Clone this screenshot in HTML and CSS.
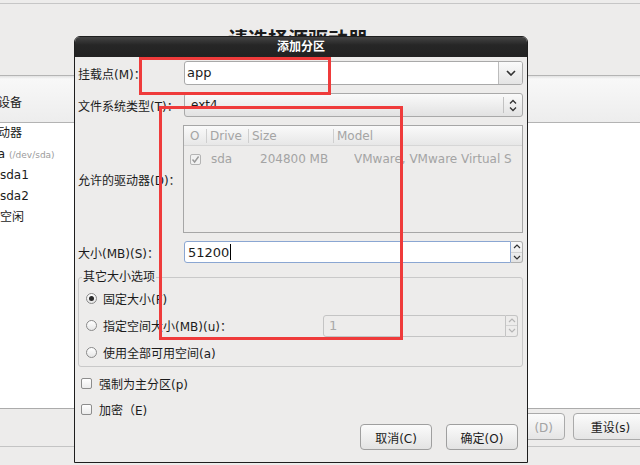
FILE: index.html
```html
<!DOCTYPE html>
<html lang="zh-CN">

<head>
    <meta charset="UTF-8">
    <meta name="viewport" content="width=device-width, initial-scale=1.0">
    <title>添加分区</title>
    <link rel="stylesheet" href="styles.css">
</head>

<body>
    <!-- installer screen behind the dialog -->
    <div class="screen">
        <div class="topline"></div>
        <h1 class="heading">请选择源驱动器</h1>
        <div class="devices">
            <div class="devices-head"><span class="head-text">存储设备</span></div>
            <ul class="tree">
                <li class="lvl0">硬盘驱动器</li>
                <li class="lvl1">sda <span class="dim">(/dev/sda)</span></li>
                <li class="lvl2">sda1</li>
                <li class="lvl2">sda2</li>
                <li class="lvl2">空闲</li>
            </ul>
            <div class="devices-foot">
                <button class="bg-btn btn-off">删除 (D)</button>
                <button class="bg-btn">重设(s)</button>
            </div>
        </div>
    </div>

    <!-- add partition dialog -->
    <div class="dialog">
        <div class="titlebar">添加分区</div>
        <div class="dialog-body">
            <div class="form">
                <label class="lbl">挂载点(M)：</label>
                <div class="combo-entry">
                    <span class="entry-text">app</span>
                    <span class="combo-btn">
                        <svg width="10" height="6" viewBox="0 0 10 6"><path d="M1 1 L5 5 L9 1" fill="none" stroke="#333" stroke-width="1.6"/></svg>
                    </span>
                </div>

                <label class="lbl">文件系统类型(T)：</label>
                <div class="combo">
                    <span class="combo-text">ext4</span>
                    <span class="combo-sep"></span>
                    <span class="combo-arrows">
                        <svg width="8" height="13" viewBox="0 0 8 13"><path d="M1 4.5 L4 1.5 L7 4.5 M1 8.5 L4 11.5 L7 8.5" fill="none" stroke="#333" stroke-width="1.3"/></svg>
                    </span>
                </div>

                <label class="lbl">允许的驱动器(D)：</label>
                <div class="drives">
                    <div class="drives-head">
                        <span class="dh-cell dh-first">O</span>
                        <span class="dh-cell dh-drive">Drive</span>
                        <span class="dh-cell dh-size">Size</span>
                        <span class="dh-cell dh-model">Model</span>
                    </div>
                    <div class="drive-row">
                        <span class="dr-check">
                            <span class="check check-dim">
                                <svg width="9" height="9" viewBox="0 0 9 9"><path d="M1.5 4.5 L3.6 7 L7.6 1.5" fill="none" stroke="#9a9a9a" stroke-width="1.4"/></svg>
                            </span>
                        </span>
                        <span>sda</span>
                        <span>204800 MB</span>
                        <span class="dr-model">VMware, VMware Virtual SCSI Disk</span>
                    </div>
                </div>

                <label class="lbl">大小(MB)(S)：</label>
                <div class="spin">
                    <span class="spin-entry focus">51200<span class="caret"></span></span>
                    <span class="spin-btns">
                        <span class="spin-half"><svg width="8" height="5" viewBox="0 0 8 5"><path d="M1 4 L4 1 L7 4" fill="none" stroke="#333" stroke-width="1.2"/></svg></span>
                        <span class="spin-half"><svg width="8" height="5" viewBox="0 0 8 5"><path d="M1 1 L4 4 L7 1" fill="none" stroke="#333" stroke-width="1.2"/></svg></span>
                    </span>
                </div>
            </div>

            <fieldset class="frame">
                <legend>其它大小选项</legend>
                <div class="radio-row">
                    <span class="radio checked"></span>
                    <span>固定大小(F)</span>
                </div>
                <div class="radio-row">
                    <span class="radio"></span>
                    <span>指定空间大小(MB)(u)：</span>
                    <div class="spin spin-off">
                        <span class="spin-entry">1</span>
                        <span class="spin-btns">
                            <span class="spin-half"><svg width="8" height="5" viewBox="0 0 8 5"><path d="M1 4 L4 1 L7 4" fill="none" stroke="#b5b5b5" stroke-width="1.2"/></svg></span>
                            <span class="spin-half"><svg width="8" height="5" viewBox="0 0 8 5"><path d="M1 1 L4 4 L7 1" fill="none" stroke="#b5b5b5" stroke-width="1.2"/></svg></span>
                        </span>
                    </div>
                </div>
                <div class="radio-row">
                    <span class="radio"></span>
                    <span>使用全部可用空间(a)</span>
                </div>
            </fieldset>

            <div class="check-row first">
                <span class="check"></span>
                <span>强制为主分区(p)</span>
            </div>
            <div class="check-row">
                <span class="check"></span>
                <span>加密（E)</span>
            </div>

            <div class="actions">
                <button class="btn">取消(C)</button>
                <button class="btn">确定(O)</button>
            </div>
        </div>
    </div>

    <!-- red annotation boxes -->
    <div class="mark mark-mount"></div>
    <div class="mark mark-area"></div>
</body>

</html>
```

FILE: styles.css
```css
* {
    box-sizing: border-box;
}

body {
    margin: 0;
    width: 640px;
    height: 465px;
    overflow: hidden;
    position: relative;
    background: #edeceb;
    font-family: "DejaVu Sans", "Noto Sans CJK SC", sans-serif;
    font-size: 12px;
    color: #1b1b1b;
}

button {
    font-family: inherit;
    font-size: 12px;
    color: #1b1b1b;
}

/* background screen */
.screen {
    padding-top: 3px;
}

.topline {
    height: 1px;
    background: #c6c6c6;
}

.heading {
    margin: 0;
    height: 71px;
    padding: 24px 44px 0 0;
    text-align: center;
    font-size: 20px;
    line-height: 24px;
    font-weight: bold;
}

.devices {
    width: 648px;
    border-top: 1px solid #b4b4b4;
}

.devices-head {
    height: 47px;
    padding-top: 17px;
    border-bottom: 1px solid #b3b3b3;
    background: linear-gradient(#e2e2e2 0, #f8f8f8 3px, #ededed 100%);
}

.head-text {
    margin-left: -26px;
}

.tree {
    list-style: none;
    margin: 0;
    padding: 0;
    height: 286px;
    background: #fff;
    border-bottom: 1px solid #ababab;
}

.tree li {
    height: 21px;
    line-height: 21px;
    white-space: nowrap;
}

.tree .lvl0 {
    margin-left: -38px;
}

.tree .lvl1 {
    margin-left: -16px;
}

.dim {
    color: #9b9b9b;
    font-size: 9px;
}

.devices-foot {
    height: 38px;
    padding-top: 4px;
    border-bottom: 1px solid #c4c4c4;
    display: flex;
    justify-content: flex-end;
    gap: 8px;
}

.bg-btn {
    width: 75px;
    height: 27px;
    border: 1px solid #aaa;
    border-radius: 4px;
    background: linear-gradient(#fbfbfb, #e5e5e5);
}

.btn-off {
    color: #a3a3a3;
    text-align: right;
    padding-right: 11px;
    word-spacing: 4px;
}

/* dialog window */
.dialog {
    position: absolute;
    left: 74px;
    top: 36px;
    width: 454px;
    height: 427px;
    background: #edeceb;
    border: 1px solid #1e1e1e;
    border-radius: 6px 6px 0 0;
    overflow: hidden;
}

.titlebar {
    height: 20px;
    line-height: 21px;
    text-align: center;
    color: #fff;
    font-weight: bold;
    background: linear-gradient(#444, #262626 40%, #222);
}

.dialog-body {
    padding: 4px 4px 0 3px;
}

.form {
    display: grid;
    grid-template-columns: 106px 1fr;
    grid-template-rows: 24px 24px 108px 22px;
    row-gap: 8px;
    align-items: center;
}

.lbl {
    white-space: nowrap;
}

.combo-entry {
    height: 24px;
    display: flex;
    background: #fff;
    border: 1px solid #a9a9a9;
    border-radius: 3px;
    overflow: hidden;
}

.entry-text {
    flex: 1;
    padding-left: 2px;
    line-height: 22px;
    font-size: 13px;
}

.combo-btn {
    width: 24px;
    display: flex;
    align-items: center;
    justify-content: center;
    border-left: 1px solid #bcbcbc;
    background: linear-gradient(#fafafa, #e4e4e4);
}

.combo {
    height: 24px;
    display: flex;
    align-items: center;
    border: 1px solid #a9a9a9;
    border-radius: 3px;
    background: linear-gradient(#fafafa, #e2e2e2);
}

.combo-text {
    flex: 1;
    padding-left: 6px;
}

.combo-sep {
    width: 1px;
    height: 16px;
    background: #c2c2c2;
}

.combo-arrows {
    width: 18px;
    display: flex;
    justify-content: center;
}

.drives {
    height: 108px;
    margin-left: -1px;
    border: 1px solid #a6a6a6;
    color: #a4a4a4;
    overflow: hidden;
}

.drives-head {
    height: 20px;
    display: flex;
    align-items: center;
    border-bottom: 1px solid #d6d6d6;
    background: linear-gradient(#fafafa, #e7e7e7);
}

.dh-cell {
    line-height: 14px;
    padding-left: 3px;
    border-left: 1px solid #cfcfcf;
}

.dh-first {
    width: 22px;
    padding-left: 6px;
    border-left: 0;
}

.dh-drive {
    width: 42px;
}

.dh-size {
    width: 85px;
}

.drive-row {
    height: 20px;
    margin-top: 3px;
    display: grid;
    grid-template-columns: 27px 49px 94px 158px;
    align-items: center;
    white-space: nowrap;
}

.dr-check {
    padding-left: 6px;
    display: flex;
}

.dr-model {
    overflow: hidden;
}

.check {
    width: 11px;
    height: 11px;
    display: inline-flex;
    align-items: center;
    justify-content: center;
    border: 1px solid #8d8d8d;
    border-radius: 2px;
    background: linear-gradient(#fff, #ebebeb);
}

.check-dim {
    border-color: #b4b4b4;
    background: #f1f1f1;
}

.spin {
    height: 22px;
    display: flex;
}

.spin-entry {
    flex: 1;
    display: flex;
    align-items: center;
    padding-left: 3px;
    font-size: 13px;
    background: #fff;
    border: 1px solid #b5b5b5;
    border-radius: 3px 0 0 3px;
}

.spin-entry.focus {
    border-color: #8aa6d2;
}

.caret {
    width: 1px;
    height: 16px;
    margin-left: 1px;
    background: #000;
}

.spin-btns {
    width: 12px;
    display: flex;
    flex-direction: column;
    border: 1px solid #b0b0b0;
    border-left: 0;
    border-radius: 0 3px 3px 0;
    background: linear-gradient(#fafafa, #e3e3e3);
}

.spin-half {
    flex: 1;
    display: flex;
    align-items: center;
    justify-content: center;
}

.spin-half + .spin-half {
    border-top: 1px solid #d2d2d2;
}

/* other size options frame */
.frame {
    margin: 7px 0 0;
    padding: 0 4px 0 3px;
    border: 1px solid #c9c9c9;
    border-radius: 3px;
}

.frame legend {
    padding: 0 1px;
    line-height: 15px;
}

.radio-row {
    height: 27px;
    display: flex;
    align-items: center;
    gap: 6px;
    padding-left: 4px;
}

.radio {
    width: 11px;
    height: 11px;
    border: 1px solid #8a8a8a;
    border-radius: 50%;
    background: linear-gradient(#fff, #e6e6e6);
    display: flex;
    align-items: center;
    justify-content: center;
}

.radio.checked::after {
    content: "";
    width: 5px;
    height: 5px;
    border-radius: 50%;
    background: #2a2a2a;
}

.spin-off {
    width: 195px;
    margin-left: auto;
}

.spin-off .spin-entry {
    color: #a9a9a9;
    padding-left: 5px;
    background: #edeceb;
    border-color: #c4c4c4;
}

.spin-off .spin-btns {
    border-color: #c4c4c4;
    background: #edeceb;
}

.check-row {
    height: 26px;
    display: flex;
    align-items: center;
    gap: 7px;
    padding-left: 3px;
}

.check-row.first {
    margin-top: 3px;
}

.actions {
    display: flex;
    justify-content: flex-end;
    gap: 14px;
    margin: 2px 5px 0 0;
}

.btn {
    width: 72px;
    height: 26px;
    border: 1px solid #9f9f9f;
    border-radius: 4px;
    background: linear-gradient(#fbfbfb, #e3e3e3);
}

/* annotation */
.mark {
    position: absolute;
    border: 3px solid #ef3b3b;
}

.mark-mount {
    left: 139px;
    top: 57px;
    width: 192px;
    height: 38px;
}

.mark-area {
    left: 159px;
    top: 106px;
    width: 244px;
    height: 234px;
}
```
